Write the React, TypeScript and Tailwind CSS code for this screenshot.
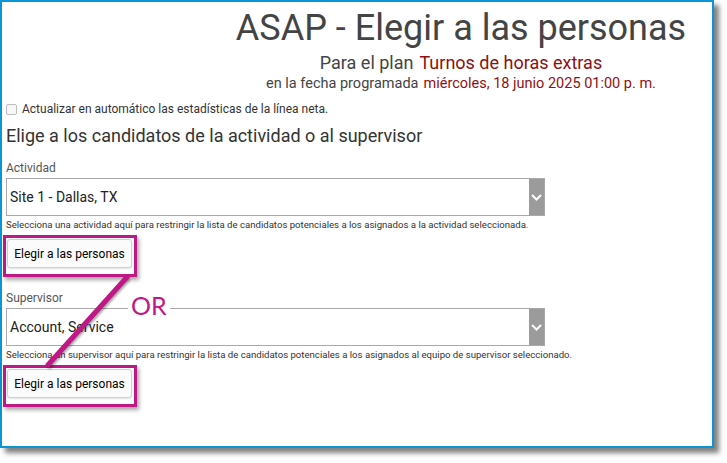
import React from 'react';

const SelectBox = ({ value }: { value: string }) => (
  <div className="flex h-[38px] w-[539px] border border-[#a9a9a9] bg-white">
    <div className="flex flex-1 items-center pl-[3px] text-[14px] text-[#222]">{value}</div>
    <div className="flex w-[15px] items-center justify-center bg-[#9b9b9b]">
      <svg width="11" height="7" viewBox="0 0 11 7">
        <path d="M1 1l4.5 4.5L10 1" stroke="#fff" strokeWidth="2" fill="none" />
      </svg>
    </div>
  </div>
);

// button wrapped in the magenta callout box
const PickButton = () => (
  <div className="relative ml-[1px] w-fit">
    <button className="h-[29px] w-[125px] rounded-[3px] border border-[#d0d0d0] bg-[#fbfbfb] text-[12px] text-black shadow-[0_1px_2px_rgba(0,0,0,0.12)]">
      Elegir a las personas
    </button>
    <div className="pointer-events-none absolute left-[-4px] top-[-4px] h-[42px] w-[134px] border-[3.5px] border-[#c01884] shadow-[2px_3px_4px_rgba(0,0,0,0.35)]" />
  </div>
);

export default function App() {
  return (
    <div className="relative h-[463px] w-[727px] bg-white font-[family-name:Roboto,sans-serif] text-[#333]">
      <div className="h-[448px] w-[714px] border-2 border-[#0a95d6] bg-white shadow-[5px_5px_5px_rgba(0,0,0,0.5)]">
        {/* page header */}
        <div className="pl-[208px] pt-[8px] text-center">
          <h1 className="text-[36px] leading-[36px] text-[#444]">ASAP - Elegir a las personas</h1>
          <div className="mt-[6px] text-[18px] leading-[22px] text-[#444]">
            <span className="mr-[6px]">Para el plan</span>
            <span className="text-[#8e1012]">Turnos de horas extras</span>
          </div>
          <div className="mt-[1px] text-[14.5px] leading-[18px] text-[#444]">
            <span className="mr-[5px]">en la fecha programada</span>
            <span className="text-[#8e1012]">miércoles, 18 junio 2025 01:00 p. m.</span>
          </div>
        </div>

        <div className="px-[4px]">
          <label className="mt-[8px] flex items-center gap-[5px] text-[12px] leading-[16px] text-[#333]">
            <span className="h-[11px] w-[11px] rounded-[2px] border border-[#bdbdbd] bg-[#f7f7f7]" />
            Actualizar en automático las estadísticas de la línea neta.
          </label>
          <h2 className="mt-[7px] text-[18px] leading-[24px] text-[#333]">
            Elige a los candidatos de la actividad o al supervisor
          </h2>

          {/* activity */}
          <div className="mt-[12px] text-[12px] leading-[16px] text-[#555]">Actividad</div>
          <div className="mt-[2px]">
            <SelectBox value="Site 1 - Dallas, TX" />
          </div>
          <p className="mt-[2px] text-[9.6px] leading-[14px] text-[#333]">
            Selecciona una actividad aquí para restringir la lista de candidatos potenciales a los asignados a la actividad seleccionada.
          </p>
          <div className="mt-[7px]">
            <PickButton />
          </div>

          {/* supervisor */}
          <div className="mt-[22px] text-[12px] leading-[16px] text-[#555]">Supervisor</div>
          <div className="mt-[2px]">
            <SelectBox value="Account, Service" />
          </div>
          <p className="mt-[2px] text-[9.6px] leading-[14px] text-[#333]">
            Selecciona un supervisor aquí para restringir la lista de candidatos potenciales a los asignados al equipo de supervisor seleccionado.
          </p>
          <div className="mt-[7px]">
            <PickButton />
          </div>
        </div>
      </div>

      {/* connector between the two callouts */}
      <svg
        className="pointer-events-none absolute left-0 top-0 drop-shadow-[1px_2px_1px_rgba(0,0,0,0.35)]"
        width="727"
        height="463"
      >
        <line x1="128" y1="276" x2="47" y2="366" stroke="#c01884" strokeWidth="5" />
      </svg>
      <div className="absolute left-[128px] top-[291px] bg-white px-[3px] font-[family-name:Lato,sans-serif] text-[25px] leading-[28px] font-normal text-[#c01884]">
        OR
      </div>
    </div>
  );
}
